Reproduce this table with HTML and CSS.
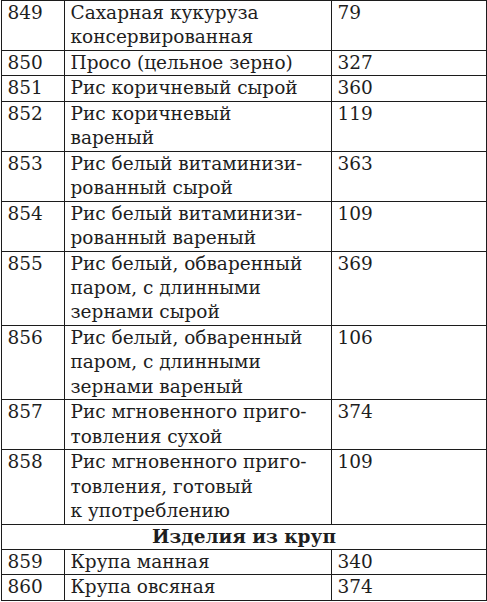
FILE: index.html
```html
<!DOCTYPE html>
<html lang="ru">
<head>
<meta charset="utf-8">
<link rel="stylesheet" href="styles.css">
</head>
<body>
<table class="tbl">
  <colgroup>
    <col class="c-num">
    <col class="c-name">
    <col class="c-val">
  </colgroup>
  <tbody>
    <tr><td>849</td><td>Сахарная кукуруза<br>консервированная</td><td>79</td></tr>
    <tr><td>850</td><td>Просо (цельное зерно)</td><td>327</td></tr>
    <tr><td>851</td><td>Рис коричневый сырой</td><td>360</td></tr>
    <tr><td>852</td><td>Рис коричневый<br>вареный</td><td>119</td></tr>
    <tr><td>853</td><td>Рис белый витаминизи-<br>рованный сырой</td><td>363</td></tr>
    <tr><td>854</td><td>Рис белый витаминизи-<br>рованный вареный</td><td>109</td></tr>
    <tr><td>855</td><td>Рис белый, обваренный<br>паром, с длинными<br>зернами сырой</td><td>369</td></tr>
    <tr><td>856</td><td>Рис белый, обваренный<br>паром, с длинными<br>зернами вареный</td><td>106</td></tr>
    <tr><td>857</td><td>Рис мгновенного приго-<br>товления сухой</td><td>374</td></tr>
    <tr><td>858</td><td>Рис мгновенного приго-<br>товления, готовый<br>к употреблению</td><td>109</td></tr>
    <tr><td class="section" colspan="3">Изделия из круп</td></tr>
    <tr><td>859</td><td>Крупа манная</td><td>340</td></tr>
    <tr><td>860</td><td>Крупа овсяная</td><td>374</td></tr>
  </tbody>
</table>
</body>
</html>
```

FILE: styles.css
```css
html, body {
  margin: 0;
  padding: 0;
  background: #ffffff;
}

.tbl {
  margin: 0 0 0 1px;
  width: 485px;
  border-collapse: collapse;
  table-layout: fixed;
  font-family: "DejaVu Serif", "Liberation Serif", serif;
  font-size: 18.5px;
  line-height: 24.45px;
  color: #1e1e1e;
}

.c-num { width: 63px; }
.c-name { width: 267px; }
.c-val { width: 155px; }

.tbl td {
  border: 1px solid #1c1c1c;
  padding: 0 0 0 5.5px;
  vertical-align: top;
  white-space: nowrap;
}

.tbl td.section {
  text-align: center;
  font-weight: bold;
  padding: 0;
}
```
